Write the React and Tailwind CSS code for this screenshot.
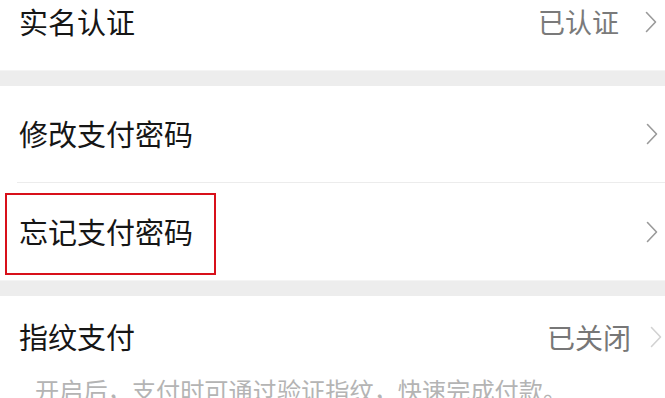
import React from 'react';

const font = { fontFamily: '"Noto Sans CJK SC", "Noto Sans", sans-serif' };

const Chevron = ({ className = 'text-[#9a9a9a]' }) => (
  <svg width="12" height="22" viewBox="0 0 12 22" fill="none" className={className}>
    <path d="M1.5 1.5 L10.5 11 L1.5 20.5" stroke="currentColor" strokeWidth="1.6" strokeLinecap="round" strokeLinejoin="round" />
  </svg>
);

const Gap = () => <div className="h-[16px] bg-[#ededed] border-t border-[#f4f4f4]" />;

export default function App() {
  return (
    <div className="w-[665px] h-[398px] overflow-hidden bg-white" style={font}>
      {/* 实名认证 */}
      <div className="-mt-[26px] h-[96px] flex items-center pl-[19px] pr-[8px]">
        <span className="text-[29px] text-[#161616] flex-1">实名认证</span>
        <span className="text-[27px] text-[#7a7a7a] mr-[26px]">已认证</span>
        <Chevron />
      </div>

      <Gap />

      {/* 修改支付密码 */}
      <div className="h-[96px] flex items-center pl-[19px] pr-[7px]">
        <span className="text-[29px] text-[#161616] flex-1">修改支付密码</span>
        <Chevron />
      </div>
      <div className="ml-[17px] h-px bg-[#ececec]" />

      {/* 忘记支付密码 */}
      <div className="relative h-[97px] flex items-center pl-[19px] pr-[7px]">
        <span className="text-[29px] text-[#161616] flex-1">忘记支付密码</span>
        <Chevron />
        <div className="absolute left-[5px] top-[10px] w-[211px] h-[82px] border-2 border-[#d8101a]" />
      </div>

      <Gap />

      {/* 指纹支付 */}
      <div className="pt-[20px]">
        <div className="h-[42px] flex items-center pl-[19px] pr-[3px]">
          <span className="text-[29px] text-[#161616] flex-1">指纹支付</span>
          <span className="text-[28px] text-[#777777] mr-[19px]">已关闭</span>
          <Chevron className="text-[#d2d2d2]" />
        </div>
        <p className="mt-[16px] pl-[35px] text-[24.2px] leading-[32px] text-[#b4b4b4] whitespace-nowrap">
          开启后，支付时可通过验证指纹，快速完成付款。
        </p>
      </div>
    </div>
  );
}
